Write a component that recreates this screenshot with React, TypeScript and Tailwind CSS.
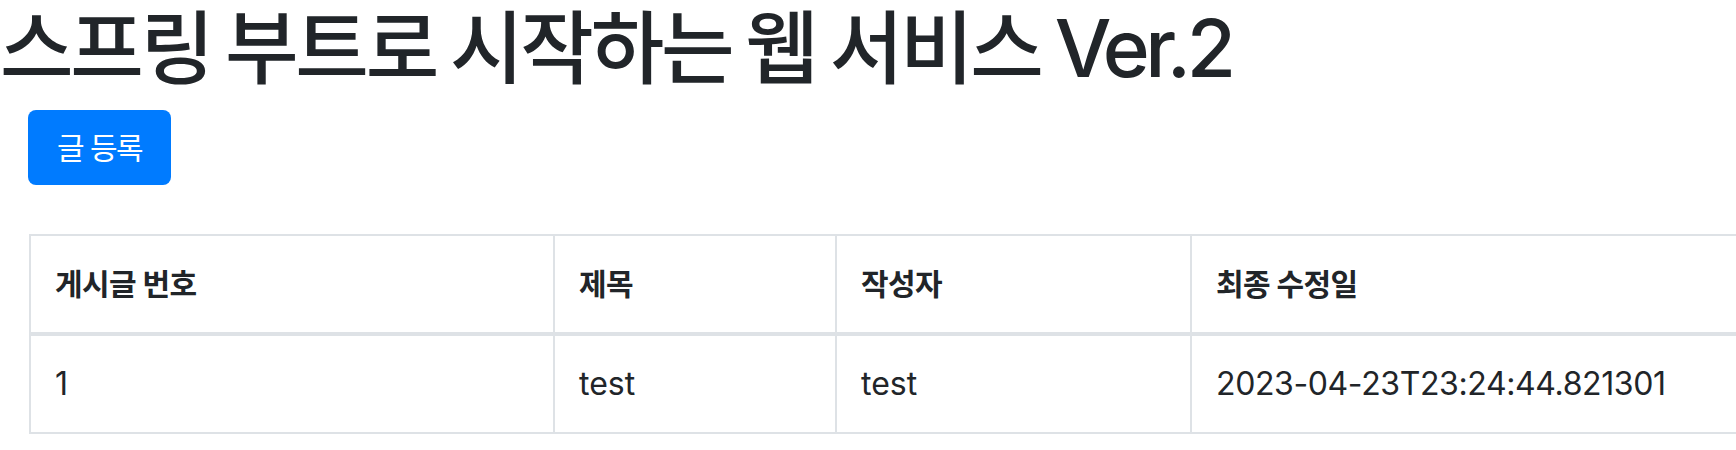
import React from 'react';

const FONT = "font-['Inter','Noto_Sans_CJK_KR',sans-serif]";

const posts = [{ id: 1, title: 'test', author: 'test', modifiedDate: '2023-04-23T23:24:44.821301' }];

const thCls = 'border-2 border-b-4 border-[#dee2e6] px-[24px] py-[24px] leading-[48px] text-[30px] font-bold tracking-[-0.02em]';
const tdCls = 'border-2 border-[#dee2e6] px-[24px] py-[24px] leading-[48px]';

export default function App() {
  return (
    <div className={`${FONT} w-[1736px] h-[450px] overflow-hidden bg-white text-[#212529]`}>
      <h1 className="m-0 h-[96px] leading-[96px] text-[80px] font-medium tracking-[-0.041em] [word-spacing:-0.05em] whitespace-nowrap">
        스프링 부트로 시작하는 웹 서비스 <span className="tracking-[-0.055em]">Ver.2</span>
      </h1>

      <div className="mt-[14px] pl-[28px]">
        <button className="h-[75px] w-[143px] rounded-[8px] bg-[#007bff] text-white text-[30px] leading-[48px] tracking-[-0.05em]">
          글 등록
        </button>
      </div>

      <div className="mt-[49px] pl-[29px]">
        <table className="table-fixed border-collapse w-[1760px] text-[32px]">
          <thead>
            <tr className="text-left">
              <th className={`w-[524px] ${thCls}`}>게시글 번호</th>
              <th className={`w-[282px] ${thCls}`}>제목</th>
              <th className={`w-[355px] ${thCls}`}>작성자</th>
              <th className={thCls}>최종 수정일</th>
            </tr>
          </thead>
          <tbody>
            {posts.map((p) => (
              <tr key={p.id}>
                <td className={tdCls}>{p.id}</td>
                <td className={tdCls}>{p.title}</td>
                <td className={tdCls}>{p.author}</td>
                <td className={`${tdCls} tracking-[-0.012em]`}>{p.modifiedDate}</td>
              </tr>
            ))}
          </tbody>
        </table>
      </div>
    </div>
  );
}
